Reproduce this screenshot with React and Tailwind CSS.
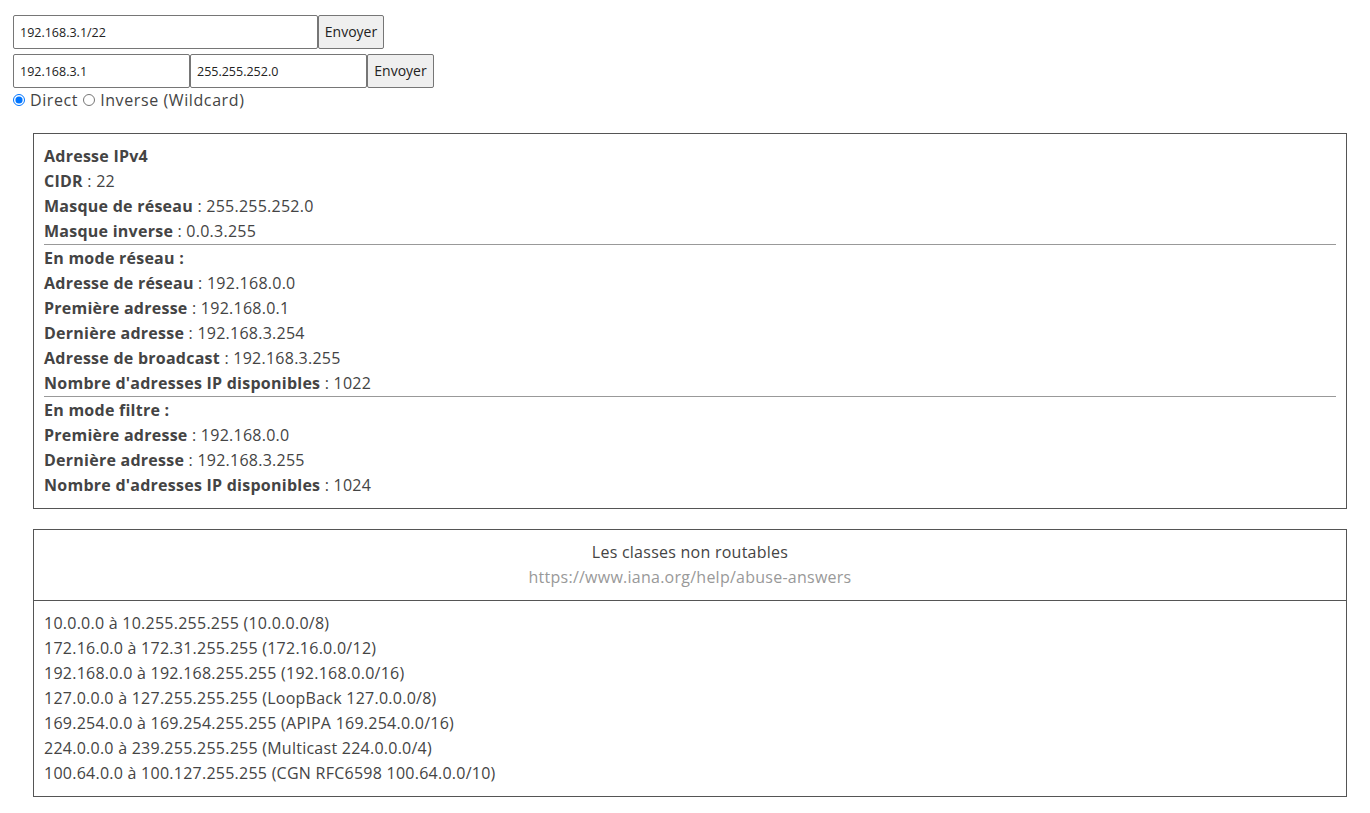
export default function App() {
  const font = { fontFamily: '"Open Sans", "Liberation Sans", sans-serif' };
  const Row = ({ k, v }) => (
    <div className="h-[25px] leading-[25px]">
      <b className="font-bold">{k}</b> : {v}
    </div>
  );
  const ranges = [
    "10.0.0.0 à 10.255.255.255 (10.0.0.0/8)",
    "172.16.0.0 à 172.31.255.255 (172.16.0.0/12)",
    "192.168.0.0 à 192.168.255.255 (192.168.0.0/16)",
    "127.0.0.0 à 127.255.255.255 (LoopBack 127.0.0.0/8)",
    "169.254.0.0 à 169.254.255.255 (APIPA 169.254.0.0/16)",
    "224.0.0.0 à 239.255.255.255 (Multicast 224.0.0.0/4)",
    "100.64.0.0 à 100.127.255.255 (CGN RFC6598 100.64.0.0/10)",
  ];
  return (
    <div className="min-h-[813px] w-[1370px] bg-white text-[16px] tracking-[0.25px] text-[#444]" style={font}>
      <div className="pl-[13px] pt-[15px]">
        <div className="flex">
          <input
            defaultValue="192.168.3.1/22"
            className="h-[34px] w-[305px] rounded-[2px] border border-[#767676] px-[6px] text-[12.5px] tracking-normal text-[#222]"
          />
          <button className="h-[34px] w-[66px] rounded-[2px] border border-[#767676] bg-[#efefef] pb-[2px] text-[14px] tracking-normal text-[#222]">
            Envoyer
          </button>
        </div>
        <div className="mt-[5px] flex">
          <input
            defaultValue="192.168.3.1"
            className="h-[34px] w-[177px] rounded-[2px] border border-[#767676] px-[6px] text-[12.5px] tracking-normal text-[#222]"
          />
          <input
            defaultValue="255.255.252.0"
            className="h-[34px] w-[177px] rounded-[2px] border border-[#767676] px-[6px] text-[12.5px] tracking-normal text-[#222]"
          />
          <button className="h-[34px] w-[67px] rounded-[2px] border border-[#767676] bg-[#efefef] pb-[2px] text-[14px] tracking-normal text-[#222]">
            Envoyer
          </button>
        </div>
        <div className="mt-[2px] flex h-[20px] items-center tracking-[0.6px]">
          <input type="radio" name="m" defaultChecked className="m-0 h-[12px] w-[12px] accent-[#0075ff]" />
          <span className="ml-[5px]">Direct</span>
          <input type="radio" name="m" className="ml-[5px] h-[12px] w-[12px]" />
          <span className="ml-[5px]">Inverse (Wildcard)</span>
        </div>
      </div>

      <div className="ml-[33px] mr-[23px] mt-[23px] border border-[#555] px-[10px] py-[10px]">
        <div className="h-[25px] font-bold leading-[25px]">Adresse IPv4</div>
        <Row k="CIDR" v="22" />
        <Row k="Masque de réseau" v="255.255.252.0" />
        <Row k="Masque inverse" v="0.0.3.255" />
        <div className="h-[2px] border-t border-[#999]" />
        <div className="h-[25px] font-bold leading-[25px]">En mode réseau :</div>
        <Row k="Adresse de réseau" v="192.168.0.0" />
        <Row k="Première adresse" v="192.168.0.1" />
        <Row k="Dernière adresse" v="192.168.3.254" />
        <Row k="Adresse de broadcast" v="192.168.3.255" />
        <Row k="Nombre d'adresses IP disponibles" v="1022" />
        <div className="h-[2px] border-t border-[#999]" />
        <div className="h-[25px] font-bold leading-[25px]">En mode filtre :</div>
        <Row k="Première adresse" v="192.168.0.0" />
        <Row k="Dernière adresse" v="192.168.3.255" />
        <Row k="Nombre d'adresses IP disponibles" v="1024" />
      </div>

      <div className="ml-[33px] mr-[23px] mt-[20px] border border-[#555]">
        <div className="border-b border-[#555] px-[10px] py-[10px] text-center">
          <div className="h-[25px] leading-[25px]">Les classes non routables</div>
          <div className="h-[25px] leading-[25px] text-[#999]">https://www.iana.org/help/abuse-answers</div>
        </div>
        <div className="px-[10px] py-[10px]">
          {ranges.map((r) => (
            <div key={r} className="h-[25px] leading-[25px]">
              {r}
            </div>
          ))}
        </div>
      </div>
    </div>
  );
}
